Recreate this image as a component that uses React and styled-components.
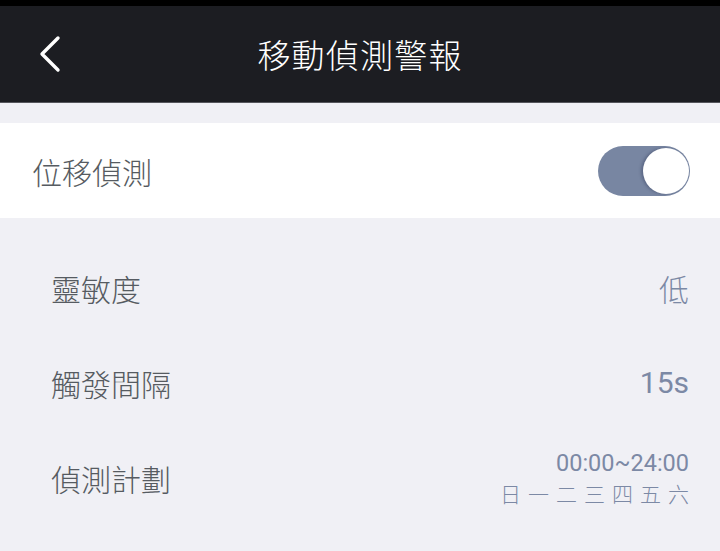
import React, { useState } from 'react';
import styled, { createGlobalStyle } from 'styled-components';

const GlobalStyle = createGlobalStyle`
  html, body {
    margin: 0;
    padding: 0;
    background: #f0f0f5;
  }
  body {
    font-family: Roboto, "Noto Sans CJK TC", "Noto Sans", sans-serif;
  }
`;

export default function App() {
  const [enabled, setEnabled] = useState(true);

  return (
    <Page>
      <GlobalStyle />
      <StatusBar />
      <Header>
        <BackButton aria-label="back">
          <svg width="24" height="38" viewBox="0 0 24 38" fill="none">
            <path d="M20 3 L4 19 L20 35" stroke="#ffffff" strokeWidth="3.4" strokeLinecap="round" strokeLinejoin="round" />
          </svg>
        </BackButton>
        <Title>移動偵測警報</Title>
      </Header>

      <SwitchRow>
        <Label>位移偵測</Label>
        <Toggle $on={enabled} onClick={() => setEnabled(!enabled)}>
          <Knob />
        </Toggle>
      </SwitchRow>

      <List>
        <Row>
          <Label $indent>靈敏度</Label>
          <Value $cjk>低</Value>
        </Row>
        <Row>
          <Label $indent>觸發間隔</Label>
          <Value>15s</Value>
        </Row>
        <Row>
          <Label $indent>偵測計劃</Label>
          <Schedule>
            <Time>00:00~24:00</Time>
            <Days>
              {['日', '一', '二', '三', '四', '五', '六'].map((d) => <span key={d}>{d}</span>)}
            </Days>
          </Schedule>
        </Row>
      </List>
    </Page>
  );
}

const Page = styled.div`
  width: 720px;
  min-height: 551px;
  background: #f0f0f5;
`;

const StatusBar = styled.div`
  height: 6px;
  background: #000000;
`;

const Header = styled.header`
  position: relative;
  height: 96px;
  background: #1c1d22;
  border-bottom: 1px solid #55565c;
  display: flex;
  align-items: center;
  justify-content: center;
`;

const BackButton = styled.button`
  position: absolute;
  left: 38px;
  top: 50%;
  transform: translateY(-50%);
  background: none;
  border: none;
  padding: 0;
  display: flex;
  cursor: pointer;
`;

const Title = styled.h1`
  margin: 0;
  color: #ffffff;
  font-size: 33px;
  font-weight: 300;
  letter-spacing: 1.2px;
`;

const SwitchRow = styled.div`
  margin-top: 20px;
  height: 95px;
  background: #ffffff;
  display: flex;
  align-items: center;
  justify-content: space-between;
  padding: 0 30px 0 32px;
`;

const Label = styled.span`
  color: #565b61;
  font-size: 30px;
  font-weight: 300;
  padding-left: ${(p) => (p.$indent ? '19px' : '0')};
`;

const Toggle = styled.div`
  width: 92px;
  height: 50px;
  border-radius: 25px;
  background: ${(p) => (p.$on ? '#7886a2' : '#d5d7de')};
  display: flex;
  align-items: center;
  justify-content: ${(p) => (p.$on ? 'flex-end' : 'flex-start')};
  padding: 0 1px;
  box-sizing: border-box;
  cursor: pointer;
`;

const Knob = styled.div`
  width: 46px;
  height: 46px;
  border-radius: 50%;
  background: #ffffff;
  box-shadow: -2px 0 3px rgba(40, 50, 80, 0.35);
`;

const List = styled.div`
  margin-top: 22px;
  display: flex;
  flex-direction: column;
`;

const Row = styled.div`
  height: 95px;
  display: flex;
  align-items: center;
  justify-content: space-between;
  padding: 0 31px 0 32px;
`;

const Value = styled.span`
  color: #7c89a5;
  font-size: 30px;
  font-weight: ${(p) => (p.$cjk ? 300 : 400)};
`;

const Schedule = styled.div`
  display: flex;
  flex-direction: column;
  align-items: flex-end;
  gap: 4px;
  color: #7c89a5;
`;

const Time = styled.span`
  font-size: 23.5px;
  line-height: 28px;
  padding-top: 2px;
`;

const Days = styled.div`
  display: flex;
  gap: 7px;
  font-size: 21px;
  font-weight: 300;
  line-height: 28px;
`;
